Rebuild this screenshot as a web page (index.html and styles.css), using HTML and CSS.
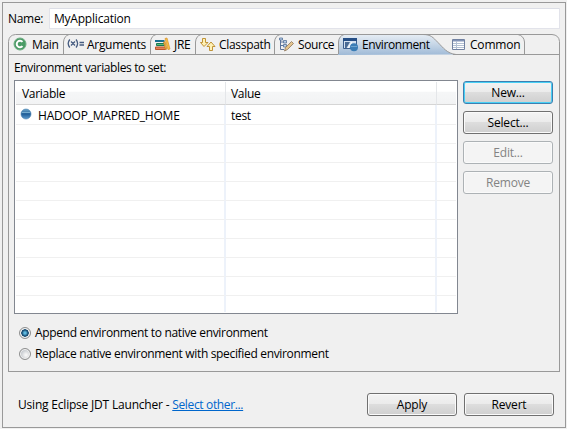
FILE: index.html
```
<!DOCTYPE html>
<html lang="en">
<head>
<meta charset="utf-8">
<title>Run Configuration</title>
<link rel="stylesheet" href="styles.css">
</head>
<body>
<main class="frame">
  <div class="name-row"><label class="name-label" for="name">Name:</label><input id="name" class="name-input" value="MyApplication"></div>
  <section class="folder">
    <svg class="outline" width="552" height="21" viewBox="0 0 552 21">
      <defs><linearGradient id="active" x1="0" y1="0" x2="0" y2="1"><stop offset="0" stop-color="#e6edf4"/><stop offset=".5" stop-color="#c5d5e6"/><stop offset="1" stop-color="#9fbad7"/></linearGradient></defs>
      <path d="M330 21V7q0-3 3-5l2-1.500h80c8 0 10 3 15 8s9 11 18 12z" fill="url(#active)"/>
      <g fill="none" stroke="#999">
        <path d="M.5 21V7.500Q1 1 7.500.500H544Q551 1 551.500 7.500V21"/>
        <path d="M0 20.500H330M445 20.500H552M55.500 20V8Q56 2 61 .500M142.500 20V8Q143 2 148 .500M187.500 20V8Q188 2 193 .500M266.500 20V8Q267 2 272 .500M330.500 20V8Q331 2 336 .500M415 .500c8 0 10 3 15 8s9 11 18 12M510 .500Q516 2 516.500 8V20"/>
      </g>
    </svg>
    <nav class="tabs">
      <div class="tab main"><svg width="14" height="14" viewBox="0 0 14 14"><circle cx="7" cy="7" r="6" fill="#4b9b66" stroke="#6fae83"/><path d="M9.500 4.800A3.300 3.300 0 1 0 9.500 9.200" fill="none" stroke="#fff" stroke-width="2"/></svg><span>Main</span></div>
      <div class="tab args"><svg width="17" height="14" viewBox="0 0 17 14"><g fill="none" stroke="#465c80" stroke-width="1.300"><path d="M2.800 2.500Q-.4 6.500 2.800 10.500M9 2.500Q12.200 6.500 9 10.500M4 4.500l4 4M8 4.500l-4 4M12.500 5.500H17M12.500 8H17"/></g></svg><span>Arguments</span></div>
      <div class="tab jre"><svg width="16" height="14" viewBox="0 0 16 14"><path d="M0 3h9.500v2H0z" fill="#176f91"/><path d="M1.500 6.500h8v2h-8z" fill="#5cba78" stroke="#177a54"/><path d="M.5 10h10v2.500H.5z" fill="#e18356" stroke="#b9532b"/><path d="M8.500 5l1.500-.4 2 7.500-1.500.4z" fill="#efb641" stroke="#bc7a21" stroke-width=".6"/><path d="M10 1.500l2-.5 3 11-2 .6z" fill="#f5bf43" stroke="#d8902b" stroke-width=".7"/></svg><span>JRE</span></div>
      <div class="tab cp"><svg width="16" height="15" viewBox="0 0 16 15"><g fill="#fff1b5" stroke="#b98926" stroke-width=".9"><path d="M2.500 1.500h3v4h2.500L4 9.500.500 5.500h2z"/><path d="M11 5L15 9.500h-2.500v4h-3v-4H7z"/></g></svg><span>Classpath</span></div>
      <div class="tab src"><svg width="16" height="15" viewBox="0 0 16 15"><path d="M1.500 2v10.500H5M1.500 5H5M1.500 8.500H5" fill="none" stroke="#5c759c"/><path d="M.5 1h3v2h-3zM4.500 3.500h3v2.500h-3zM4.500 7.500h3v2.500h-3z" fill="#bad0e8" stroke="#557299" stroke-width=".8"/><path d="M5.500 14l1-3.500 6-6 2 2-6 6z" fill="#e3c48e" stroke="#8d755a" stroke-width=".8"/></svg><span>Source</span></div>
      <div class="tab env"><svg width="16" height="15" viewBox="0 0 16 15"><path d="M.5 1.500h13v10H.5z" fill="#d5e2f0" stroke="#3c5f8e"/><path d="M0 1h14v3H0z" fill="#254e85"/><path d="M2 5h5L3.500 11H2z" fill="#4a6b95"/><path d="M5 11l4-6" stroke="#fff"/><circle cx="11" cy="10.300" r="4" fill="#3b7db5"/><path d="M8 9.500h6" stroke="#6ea4cf" stroke-width="1"/></svg><span>Environment</span></div>
      <div class="tab common"><svg width="14" height="13" viewBox="0 0 14 13"><path d="M.5 1.500h12v10H.5z" fill="#fff" stroke="#7181a1"/><path d="M1 2h11v1.500H1z" fill="#8293b6"/><path d="M1 5.500h11M1 7.500h11M1 9.500h11M4.500 3v8" stroke="#b3c0d3"/></svg><span>Common</span></div>
    </nav>
    <div class="content">
      <div class="heading"><span>Environment variables to set:</span></div>
      <div class="body">
        <div class="table">
          <div class="row header"><div class="cell">Variable</div><div class="cell">Value</div><div></div></div>
          <div class="row first"><div class="cell variable"><svg width="12" height="12" viewBox="0 0 12 12"><defs><linearGradient id="ball" x2="0" y2="1"><stop stop-color="#70a9cc"/><stop offset=".5" stop-color="#205e98"/><stop offset="1" stop-color="#5d9bce"/></linearGradient></defs><circle cx="6" cy="6" r="5" fill="url(#ball)" stroke="#477eac" stroke-width=".6"/><path d="M2 4.500h8" stroke="#75accf"/></svg><span>HADOOP_MAPRED_HOME</span></div><div class="cell">test</div><div></div></div>
          <div class="row"><div></div><div></div><div></div></div><div class="row"><div></div><div></div><div></div></div><div class="row"><div></div><div></div><div></div></div><div class="row"><div></div><div></div><div></div></div><div class="row"><div></div><div></div><div></div></div><div class="row"><div></div><div></div><div></div></div><div class="row"><div></div><div></div><div></div></div><div class="row"><div></div><div></div><div></div></div><div class="row"><div></div><div></div><div></div></div><div class="row last"><div></div><div></div><div></div></div>
        </div>
        <div class="actions"><button class="button focused">New...</button><button class="button">Select...</button><button class="button" disabled>Edit...</button><button class="button" disabled>Remove</button></div>
      </div>
      <div class="choices">
        <label><input type="radio" name="mode" checked><span>Append environment to native environment</span></label>
        <label><input type="radio" name="mode"><span>Replace native environment with specified environment</span></label>
      </div>
    </div>
  </section>
  <footer class="footer"><div class="launcher"><span>Using Eclipse JDT Launcher - </span><a href="#">Select other...</a></div><button class="button">Apply</button><button class="button">Revert</button></footer>
</main>
</body>
</html>
```
FILE: styles.css
```
* { box-sizing: border-box; }
body { margin: 0; width: 567px; height: 429px; overflow: hidden; background: #f0f0f0; padding: 2px 0 0 2px; font: 12px/16px "Open Sans", "Noto Sans", sans-serif; letter-spacing: -.3px; color: #000; }
.frame { width: 564px; height: 426px; border: 1px solid #999; padding: 5px; background: #f0f0f0; }
.name-row { display: flex; height: 21px; align-items: center; }
.name-label { width: 41px; padding-top: 1px; }
.name-input { width: 512px; height: 21px; border: 1px solid #e2e3ea; border-top-color: #dcdee6; border-radius: 1px; padding: 0 4px; font: inherit; letter-spacing: -.2px; background: #fff; outline: 0; }
.folder { position: relative; width: 552px; height: 338px; margin-top: 5px; }
.outline { position: absolute; left: 0; top: 0; }
.tabs { position: relative; display: flex; height: 21px; }
.tab { display: flex; align-items: center; white-space: nowrap; flex: none; }
.tab svg { flex: none; margin-bottom: 1px; }
.main { width: 55px; padding-left: 5px; gap: 5px; }
.args { width: 87px; padding-left: 4px; gap: 3px; }
.jre { width: 45px; padding-left: 5px; gap: 3px; letter-spacing: -.3px; }
.cp { width: 79px; padding-left: 5px; gap: 3px; }
.src { width: 64px; padding-left: 5px; gap: 3px; letter-spacing: -.4px; }
.env { width: 109px; padding-left: 5px; gap: 3px; letter-spacing: -.4px; }
.common { width: 77px; padding-left: 5px; gap: 4px; letter-spacing: -.2px; }
.content { height: 317px; border: 1px solid #999; border-top: 0; padding: 5px 5px 0; }
.heading { height: 20px; letter-spacing: -.37px; }
.body { display: flex; gap: 5px; height: 234px; }
.table { width: 444px; height: 234px; border: 1px solid #828790; background: #fff; padding: 1px; }
.row { display: grid; grid-template-columns: 210px 211px 1fr; height: 19px; }
.row > div { border-right: 2px solid #edf2fa; border-bottom: 1px solid #f0f0f0; }
.row > div:last-child { border-right: 0; }
.header { height: 23px; background: linear-gradient(#fff 40%, #f5f6f7 45%, #f2f3f4); }
.header > div { border-right: 1px solid #e4e6e9; border-bottom-color: #d5d5d5; }
.header .cell { padding-top: 2px; }
.first { height: 20px; }
.cell { display: flex; align-items: center; padding-left: 6px; }
.cell + .cell { padding-left: 5px; }
.first .cell { padding-top: 2px; }
.variable { gap: 6px; letter-spacing: -.22px; }
.first .variable { padding-left: 4px; }
.variable svg { margin-bottom: 4px; }
.last > div { border-bottom: 0; }
.last { height: 16px; }
.actions { display: flex; flex-direction: column; gap: 7px; padding-top: 1px; }
.button { width: 90px; height: 23px; border: 1px solid #707070; border-radius: 3px; padding: 0; font: inherit; letter-spacing: -.2px; color: #000; background: linear-gradient(#f3f3f3, #ebebeb 48%, #dddddd 50%, #cfcfcf); box-shadow: inset 0 0 0 1px #fafafa; }
.focused { border-color: #3c7fb1; box-shadow: inset 0 0 0 1px #48d0f5; }
.button:disabled { background: #f4f4f4; border-color: #adb2b5; color: #838383; box-shadow: inset 0 0 0 1px #fafafa; }
.choices { padding: 8px 0 0 5px; letter-spacing: -.33px; }
.choices label { display: flex; align-items: center; height: 21px; gap: 4px; white-space: nowrap; }
.choices input { appearance: none; width: 12px; height: 12px; margin: 0; border: 1px solid #8e8f8f; border-radius: 50%; background: radial-gradient(circle at 60% 60%, #f5f5f5 10%, #c7cbd0 60%); box-shadow: inset 0 0 0 1px #f4f4f4; }
.choices input:checked { background: radial-gradient(circle, #5fb9df 0 1px, #164b72 3px, #164b72 3.500px, #d9dde0 4px); }
.footer { display: flex; align-items: center; height: 23px; margin-top: 21px; padding-left: 10px; gap: 7px; }
.launcher { width: 342px; white-space: pre; padding-top: 1px; letter-spacing: -.2px; }
a { color: #06c; text-decoration: underline; letter-spacing: -.35px; }
```
